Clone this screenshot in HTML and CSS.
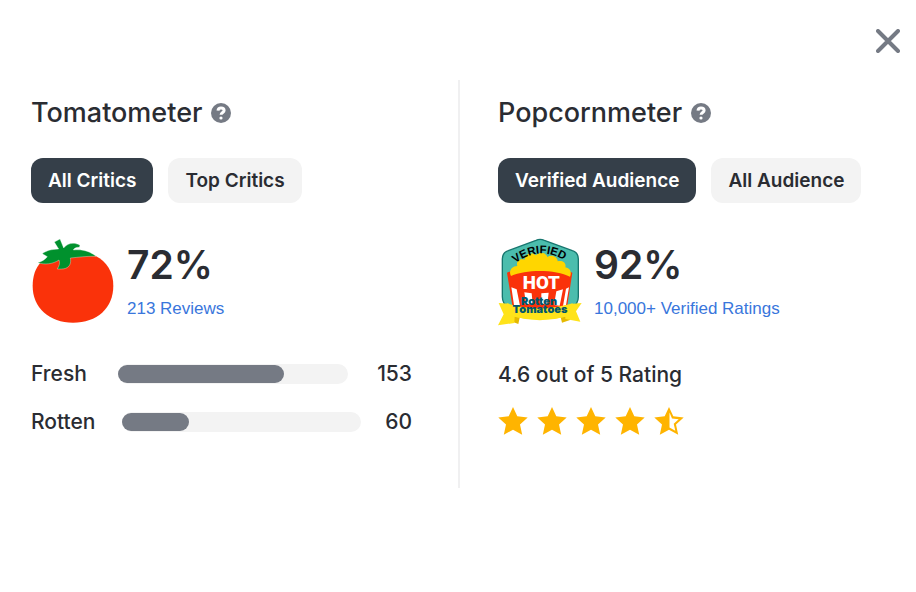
FILE: index.html
```html
<!DOCTYPE html>
<html lang="en">
<head>
<meta charset="utf-8">
<meta name="viewport" content="width=device-width, initial-scale=1">
<title>Score details</title>
<link rel="stylesheet" href="styles.css">
</head>
<body>
<svg class="defs" aria-hidden="true">
  <symbol id="star" viewBox="0 0 30 30"><path d="M15 1l4.300 9.300 10.400 1.200-7.700 7 2.200 10.200-9.200-5-9.200 5L8 18.500l-7.700-7 10.400-1.200z"/></symbol>
  <symbol id="half-star" viewBox="0 0 30 30"><path fill-rule="evenodd" d="M15 1l4.300 9.300 10.400 1.200-7.700 7 2.200 10.200-9.200-5-9.200 5L8 18.500l-7.700-7 10.400-1.200zM15.500 6.500v15l5.800 3.300-1.600-7 5-4.500-6.700-.8z"/></symbol>
  <symbol id="help" viewBox="0 0 20 20"><circle cx="10" cy="10" r="10"/><path class="mark" d="M7 7.600C7.200 5.500 8.400 4.900 10 4.900c1.900 0 3.100 1 3.100 2.500 0 2.100-3 2.100-3 4.400"/><circle class="dot" cx="10" cy="15" r="1.600"/></symbol>
</svg>
<main class="dialog">
  <header class="top">
    <button class="close" type="button" aria-label="Close">
      <svg viewBox="0 0 24 24"><path d="M2 2l20 20M22 2L2 22"/></svg>
    </button>
  </header>
  <div class="columns">
    <section class="panel">
      <div class="title">
        <h2>Tomatometer</h2>
        <button class="help" type="button" aria-label="About the Tomatometer"><svg><use href="#help"/></svg></button>
      </div>
      <div class="tabs">
        <button class="tab selected" type="button">All Critics</button>
        <button class="tab" type="button">Top Critics</button>
      </div>
      <div class="score">
        <svg class="emblem" viewBox="33 24 252 267" aria-hidden="true">
          <path fill="#fa320a" d="M63 97C46 114 38 139 38 168c0 66 50 110 121 110 72 0 121-44 121-111 0-41-20-72-53-89l-40-9-80 8z"/>
          <path fill="#00912d" stroke="#fff" stroke-width="1" d="M103 36l17-9 11 27c11-14 30-19 49-8l-2 6c-9-1-15 2-18 8 29-3 51 5 68 19-29-1-54 3-77 5 3 14-1 26-14 31-8 3-16 2-25 2 5-9 9-17 5-27-18 12-42 15-64 8 12-3 22-9 29-18l-15-9c12-9 26-13 49-14z"/>
        </svg>
        <div class="figures">
          <strong>72%</strong>
          <a href="#reviews">213 Reviews</a>
        </div>
      </div>
      <div class="counts">
        <div class="count fresh"><span>Fresh</span><div class="track"><div class="fill" style="width:72%"></div></div><b>153</b></div>
        <div class="count rotten"><span>Rotten</span><div class="track"><div class="fill" style="width:28%"></div></div><b>60</b></div>
      </div>
    </section>
    <section class="panel audience">
      <div class="title">
        <h2>Popcornmeter</h2>
        <button class="help" type="button" aria-label="About the Popcornmeter"><svg><use href="#help"/></svg></button>
      </div>
      <div class="tabs">
        <button class="tab selected" type="button">Verified Audience</button>
        <button class="tab" type="button">All Audience</button>
      </div>
      <div class="score">
        <svg class="emblem" viewBox="24 24 252 267" aria-label="Verified Hot">
          <path fill="#4bbdad" stroke="#17766f" stroke-width="4" d="M138 31q12-6 25 0l84 31q18 6 18 25v113q0 23-20 31H57q-20-8-20-31V87q0-19 18-25z"/>
          <path fill="#fa320a" d="M51 128q99-42 196 0l-18 117H70z"/>
          <path fill="#fff" d="M64 172l16 6 10 49-18-2zM103 187l22 3 3 32h-20zM154 190l22-2-4 34h-18zM199 184l20-6-10 49-17-2zM228 176l9-4-9 54-9 2z"/>
          <path fill="#ffd600" d="M63 138c-8-13 1-30 19-30-5-14 8-24 22-19-2-17 21-25 34-13 10-13 30-9 34 5 13-9 31-1 31 13 15-4 27 6 23 18 15 2 20 15 14 28-41-21-128-24-177-2z"/>
          <path id="verified-arc" fill="none" d="M76 100Q154 40 238 101"/>
          <text class="verified"><textPath href="#verified-arc">VERIFIED</textPath></text>
          <text class="hot" x="154" y="178" text-anchor="middle">HOT</text>
          <path fill="#e5b900" d="M59 248l33 2-7 32-26-10zM240 248l-31 2 7 28 24-8z"/>
          <path fill="#ffe31a" d="M26 219l32 2v17q91 20 183 0v-16l34-3-17 25 13 31-45-8v-7q-77 21-152 0l-1 19-49 7 17-33z"/>
          <path fill="#ffe31a" d="M51 220q99 30 197 0v34q-99 29-197 0z"/>
          <text class="brand" text-anchor="middle"><tspan x="147" y="226">Rotten</tspan><tspan x="150" y="250">Tomatoes</tspan></text>
        </svg>
        <div class="figures">
          <strong>92%</strong>
          <a href="#ratings">10,000+ Verified Ratings</a>
        </div>
      </div>
      <p class="rating">4.6 out of 5 Rating</p>
      <div class="stars" role="img" aria-label="4.6 out of 5 stars">
        <svg><use href="#star"/></svg><svg><use href="#star"/></svg><svg><use href="#star"/></svg><svg><use href="#star"/></svg><svg><use href="#half-star"/></svg>
      </div>
    </section>
  </div>
</main>
</body>
</html>
```
FILE: styles.css
```css
* { box-sizing: border-box; }
body { margin: 0; background: #fff; color: #2a2c32; font-family: Inter, "Liberation Sans", sans-serif; }
button { font: inherit; border: 0; padding: 0; cursor: pointer; }
.defs { display: none; }
.top { display: flex; justify-content: flex-end; height: 80px; padding: 29px 16px 0; }
.close { width: 24px; height: 24px; background: none; }
.close svg { display: block; width: 24px; height: 24px; stroke: #757a84; stroke-width: 4; stroke-linecap: round; }
.columns { display: grid; grid-template-columns: 1fr 1fr; }
.panel { min-height: 408px; padding: 16px 46px 0 31px; }
.audience { padding: 16px 31px 0 38px; border-left: 2px solid #f0f0f1; }
.title { display: flex; align-items: center; gap: 9px; height: 34px; margin-bottom: 28px; }
h2 { margin: 0; font-size: 27px; line-height: 34px; font-weight: 500; }
.help { width: 20px; height: 20px; background: none; }
.help svg { display: block; width: 20px; height: 20px; fill: #757a84; }
.mark { fill: none; stroke: #fff; stroke-width: 3; }
.dot { fill: #fff; }
.tabs { display: flex; gap: 15px; margin-bottom: 35px; }
.tab { height: 45px; padding: 0 17px; border-radius: 12px; background: #f3f3f3; color: #2a2c32; font-size: 19px; font-weight: 600; white-space: nowrap; }
.tab.selected { background: #353f49; color: #fff; }
.score { display: flex; gap: 12px; height: 89px; margin-bottom: 23px; }
.emblem { width: 84px; height: 89px; flex: none; }
.figures { padding-top: 3px; }
.figures strong { display: block; font-size: 39px; line-height: 48px; font-weight: 600; }
.figures a { display: block; margin-top: 10px; color: #3976dc; font-family: "Liberation Sans", sans-serif; font-size: 17px; line-height: 20px; text-decoration: none; white-space: nowrap; }
.count { display: grid; align-items: center; height: 48px; font-size: 21px; line-height: 26px; font-weight: 500; }
.fresh { grid-template-columns: 87px 1fr 64px; }
.rotten { grid-template-columns: 91px 1fr 51px; }
.count b { font-weight: 500; text-align: right; }
.track { height: 20px; padding: 1px 0; border-radius: 10px; background: #f3f3f3; }
.fill { height: 18px; border-radius: 9px; background: #757a84; }
.rating { margin: 0; font-size: 21px; line-height: 50px; font-weight: 500; }
.stars { display: flex; gap: 9px; padding-top: 6px; }
.stars svg { width: 30px; height: 30px; fill: #ffb400; }
.verified { font: 700 34px "Liberation Sans", sans-serif; }
.hot { font: 900 56px Roboto, sans-serif; fill: #fff; stroke: #fa320a; stroke-width: 8; paint-order: stroke; }
.brand { font: 900 33px Inter, sans-serif; fill: #00576c; }
```
